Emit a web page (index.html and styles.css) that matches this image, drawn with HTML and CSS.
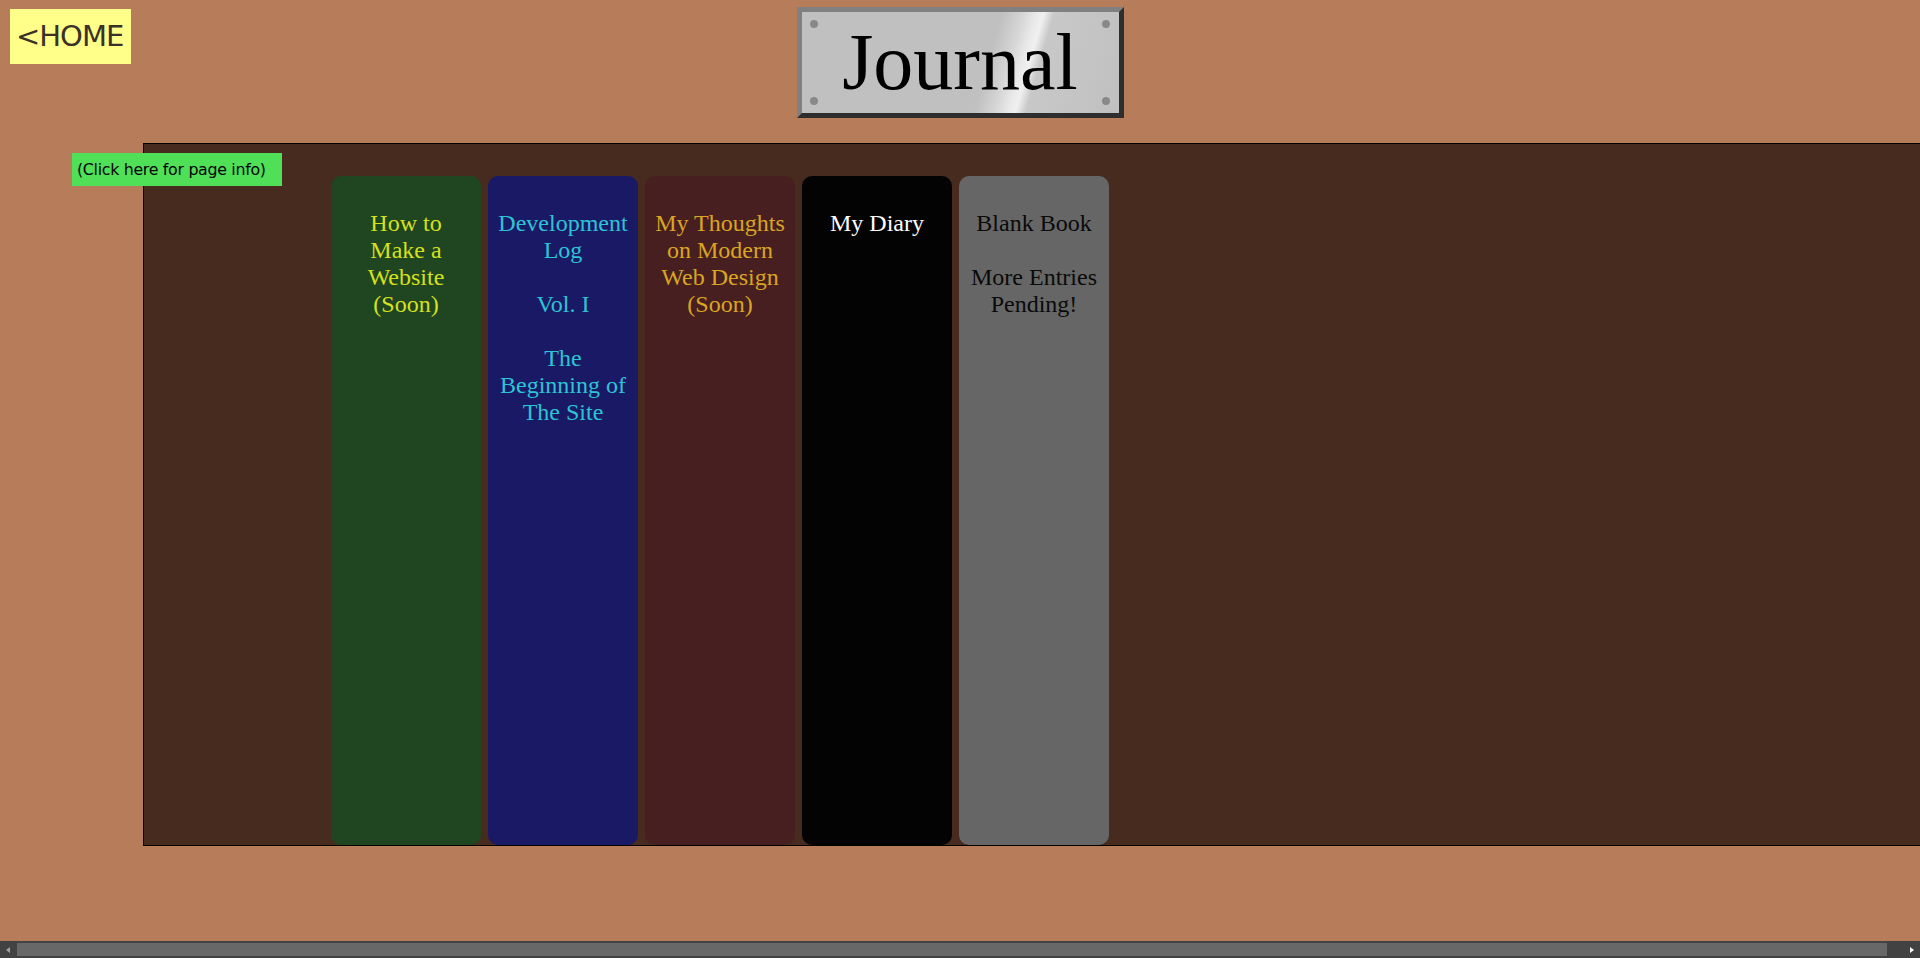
FILE: index.html
```html
<!DOCTYPE html>
<html lang="en">
<head>
<meta charset="utf-8">
<title>Journal</title>
<link rel="stylesheet" href="styles.css">
</head>
<body>
<div class="page">
  <header class="top">
    <a class="home" href="#">&lt;HOME</a>
    <div class="plaque">
      <span class="screw screw-tl"></span>
      <span class="screw screw-tr"></span>
      <span class="screw screw-bl"></span>
      <span class="screw screw-br"></span>
      <h1 class="plaque-title">Journal</h1>
    </div>
  </header>
  <a class="info" href="#">(Click here for page info)</a>
  <main class="shelf">
    <div class="book book-green">How to Make a Website (Soon)</div>
    <div class="book book-blue">Development Log<br><br>Vol. I<br><br>The Beginning of The Site</div>
    <div class="book book-maroon">My Thoughts on Modern Web Design (Soon)</div>
    <div class="book book-black">My Diary</div>
    <div class="book book-gray">Blank Book<br><br>More Entries Pending!</div>
  </main>
  <div class="hscroll" aria-hidden="true">
    <span class="hscroll-btn"><span class="arrow arrow-left"></span></span>
    <span class="hscroll-thumb"></span>
    <span class="hscroll-btn hscroll-btn-right"><span class="arrow arrow-right"></span></span>
  </div>
</div>
</body>
</html>
```
FILE: styles.css
```css
body {
  margin: 0;
  background: #b77c59;
  color: #000;
  font-family: "Liberation Serif", "Times New Roman", serif;
  overflow: hidden;
}

.page {
  position: relative;
  display: flex;
  flex-direction: column;
  height: 100vh;
  overflow: hidden;
}

.top {
  flex: none;
  display: grid;
  grid-template-columns: 1fr auto 1fr;
  align-items: start;
  width: 1920px;
}

.home {
  justify-self: start;
  margin: 9px 0 0 10px;
  width: 121px;
  height: 55px;
  box-sizing: border-box;
  background: #ffff8a;
  color: #3b3126;
  text-decoration: none;
  font-family: "DejaVu Sans", sans-serif;
  font-size: 29px;
  letter-spacing: -1px;
  line-height: 55px;
  padding-left: 6px;
  white-space: nowrap;
}

.plaque {
  position: relative;
  margin-top: 7px;
  width: 317px;
  height: 101px;
  border: 5px solid;
  border-color: #808080 #2e2e2e #2e2e2e #808080;
  background: linear-gradient(106deg, #c0c0c0 0%, #c0c0c0 58%, #d6d6d6 64%, #eaeaea 68%, #f0f0f0 70%, #c8c8c8 73%, #c0c0c0 100%);
}

.plaque-title {
  margin: 0;
  text-align: center;
  font-weight: normal;
  font-size: 80px;
  line-height: 101px;
  color: #000;
}

.screw {
  position: absolute;
  width: 8px;
  height: 8px;
  border-radius: 50%;
  background: #898989;
}

.screw-tl { left: 8px; top: 8px; }
.screw-tr { right: 9px; top: 8px; }
.screw-bl { left: 8px; bottom: 8px; }
.screw-br { right: 9px; bottom: 8px; }

.info {
  position: absolute;
  left: 72px;
  top: 153px;
  width: 210px;
  height: 33px;
  box-sizing: border-box;
  padding-left: 5px;
  background: #50e058;
  color: #000;
  text-decoration: none;
  font-family: "DejaVu Sans", sans-serif;
  font-size: 15.8px;
  line-height: 33px;
  letter-spacing: -0.3px;
  white-space: nowrap;
  z-index: 2;
}

.shelf {
  flex: none;
  display: flex;
  align-items: flex-end;
  gap: 7px;
  margin: 25px 0 0 143px;
  padding: 0 0 0 187px;
  box-sizing: border-box;
  width: 1793px;
  height: 703px;
  border: 1px solid #000;
  background: #472b1f;
}

.book {
  flex: none;
  width: 150px;
  height: 669px;
  box-sizing: border-box;
  padding: 34px 10px 0;
  border-radius: 10px;
  text-align: center;
  font-size: 24px;
  line-height: 27px;
}

.book-green { background: #1f4620; color: #d6e01e; }
.book-blue { background: #1a1966; color: #2cc4d4; }
.book-maroon { background: #471f20; color: #daa522; }
.book-black { background: #030303; color: #ffffff; }
.book-gray { background: #666666; color: #0a0a0a; }

.hscroll {
  flex: none;
  margin-top: auto;
  display: flex;
  align-items: stretch;
  width: 1920px;
  height: 17px;
  box-sizing: border-box;
  padding: 2px 0;
  background: #424242;
}

.hscroll-btn {
  flex: none;
  width: 17px;
  display: flex;
  align-items: center;
  justify-content: center;
}

.hscroll-btn-right {
  margin-left: 16px;
}

.hscroll-thumb {
  flex: 1;
  background: #686868;
}

.arrow {
  width: 0;
  height: 0;
  border-top: 3.5px solid transparent;
  border-bottom: 3.5px solid transparent;
}

.arrow-left {
  border-right: 4px solid #a3a3a3;
  margin-left: -1px;
}

.arrow-right {
  border-left: 4px solid #ffffff;
  margin-left: 1px;
}
```
